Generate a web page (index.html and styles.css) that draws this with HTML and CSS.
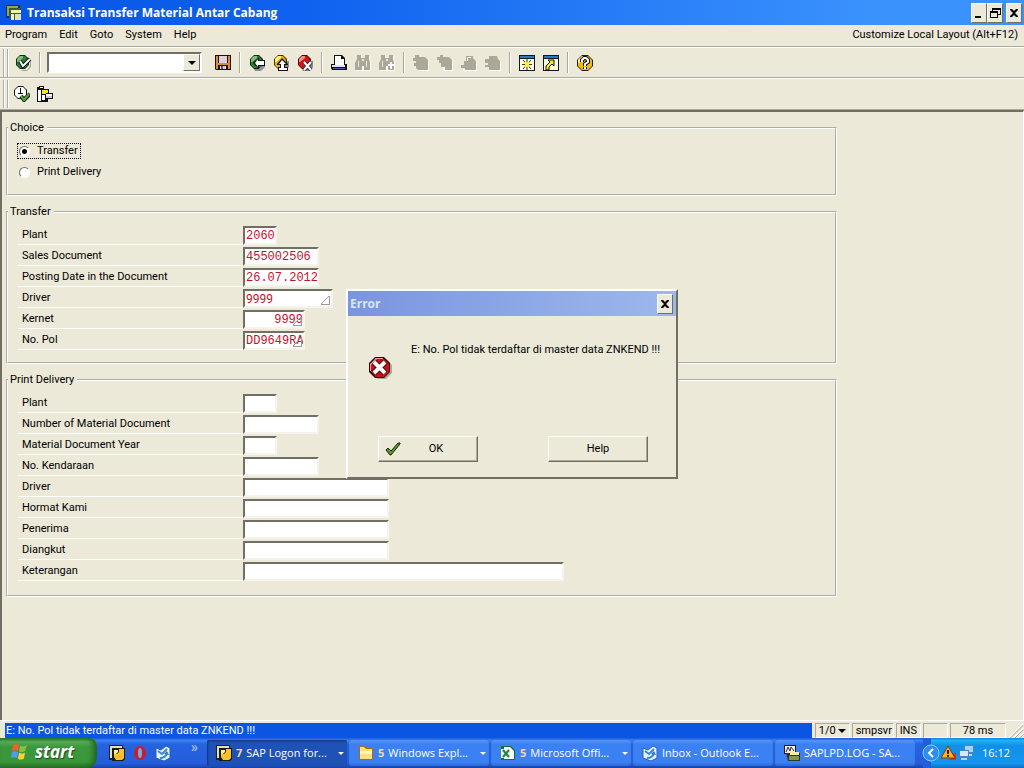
FILE: index.html
```html
<!DOCTYPE html>
<html lang="id">
<head>
<meta charset="utf-8">
<title>Transaksi Transfer Material Antar Cabang</title>
<link rel="stylesheet" href="styles.css">
</head>
<body>
<svg class="sprite" aria-hidden="true">
  <defs>
    <symbol id="app" viewBox="0 0 16 16">
      <path fill="#16324a" d="M0 0h14v3H3v10H0z"/><path fill="#8fa84e" d="M1 1h11v2H3v8H1z"/>
      <path fill="#3c5a2a" d="M3 3h12v12H5V9H3z"/><path fill="#f6f2a8" d="M5 5h10v3H5zM5 9h3v6H5z"/><path fill="#d9e3c0" d="M9 9h6v6H9z"/>
    </symbol>
    <symbol id="ok" viewBox="0 0 16 16">
      <path fill="#a9a690" d="M15 6h1v6l-4 4H7l-1-1h6l3-4z"/><path fill="#0b2e12" d="M5 0h5l4 4v6l-4 4H5l-4-4V4z"/><path fill="#2d7c3a" d="M5 1h5l3 4v5l-3 3H5l-3-3V4z"/><path fill="#86bd7e" d="M5 1h3v2L3 7H2V4z"/>
      <path fill="none" stroke="#111" stroke-width="4" d="M5 6l3 5 7-7"/><path fill="none" stroke="#fff" stroke-width="2" d="M5 6l3 5 7-7"/>
    </symbol>
    <symbol id="save" viewBox="0 0 16 16">
      <path fill="#1a1208" d="M0 0h16v15H1l-1-1z"/><path fill="#d8902c" d="M1 1h2v13H1zM13 1h2v13h-2zM3 8h10v2H3z"/><path fill="#ddd0e2" d="M4 1h8v7H4zM5 11h6v3H5z"/><path fill="#694a8b" d="M6 11h2v3H6z"/>
    </symbol>
    <symbol id="back" viewBox="0 0 16 16">
      <path fill="#8c8a9a" d="M14 6h2v6l-4 4H6l-1-2h6l3-4z"/><path fill="#0b2e12" d="M5 0h5l4 4v6l-4 4H5l-4-4V4z"/><path fill="#2d7c3a" d="M5 1h5l3 4v5l-3 3H5l-3-3V4z"/><path fill="#86bd7e" d="M5 1h3v2L3 7H2V4z"/>
      <path fill="#111" d="M4 8l6-6v3h6v6h-6v3z"/><path fill="#fff" d="M6 8l3-4v2h6v4H9v2z"/>
    </symbol>
    <symbol id="up" viewBox="0 0 16 16">
      <path fill="#8c8a9a" d="M14 6h2v6l-4 4H6l-1-2h6l3-4z"/><path fill="#4a3400" d="M5 0h5l4 4v6l-4 4H5l-4-4V4z"/><path fill="#f0b400" d="M5 1h5l3 4v5l-3 3H5l-3-3V4z"/><path fill="#fff08a" d="M5 1h3v2L3 7H2V4z"/>
      <path fill="#111" d="M9 3l6 6v1h-3v2h3v4H5v-4h2v-2H4V9z"/><path fill="#fff" d="M9 5l4 4h-2v4h3v2H6v-2h2V9H6z"/>
    </symbol>
    <symbol id="cancel" viewBox="0 0 16 16">
      <path fill="#8c8a9a" d="M14 6h2v6l-4 4H6l-1-2h6l3-4z"/><path fill="#3c0505" d="M5 0h5l4 4v6l-4 4H5l-4-4V4z"/><path fill="#d01515" d="M5 1h5l3 4v5l-3 3H5l-3-3V4z"/><path fill="#f58d8d" d="M5 1h3v2L3 7H2V4z"/>
      <path fill="none" stroke="#333" stroke-width="4" d="M7 7l7 8M14 7l-7 8"/><path fill="none" stroke="#fff" stroke-width="2" d="M7 7l7 8M14 7l-7 8"/>
    </symbol>
    <symbol id="print" viewBox="0 0 16 16">
      <path fill="#111" d="M3 0h8l3 3v6h2v6H1l-1-2V9h3z"/><path fill="#fff" d="M4 1h6v3h3v6H4z"/><path fill="#dfe3f3" d="M1 10h13v2H1z"/><path fill="#4a5fae" d="M2 13h12v1H2z"/>
    </symbol>
    <symbol id="find" viewBox="0 0 16 16">
      <path fill="#fff" d="M3 1h4v3h3V1h5v4l1 2v9H1V8z"/><path fill="#aca899" d="M2 0h4v3h4V0h4v4l1 3v8H9v-4H7v4H0V8l2-4z"/><path fill="#ece9d8" d="M7 4h2v2H7zM3 6h1v6H3zM11 6h1v6h-1z"/>
    </symbol>
    <symbol id="findnext" viewBox="0 0 16 16">
      <path fill="#fff" d="M3 1h4v3h3V1h5v4l1 2v9H1V8z"/><path fill="#aca899" d="M2 0h4v3h4V0h4v4l1 3v8H9v-4H7v4H0V8l2-4z"/><path fill="#fff" d="M11 7h2v2h2v2h-2v3h-2v-3H9V9h2z"/><path fill="#ece9d8" d="M7 4h2v2H7zM3 6h1v6H3z"/>
    </symbol>
    <symbol id="first" viewBox="0 0 16 16">
      <path fill="#fff" d="M4 3h9l3 4v9H6l-2-4z"/><path fill="#aca899" d="M2 0h4v2h6l3 3v10H5l-2-2v-2H1V8h2V6H0V3h2z"/>
    </symbol>
    <symbol id="prev" viewBox="0 0 16 16">
      <path fill="#fff" d="M5 3h8l3 4v9H6v-5z"/><path fill="#aca899" d="M0 2h3V0h3v2h6l3 3v10H8v-3H4V8H2V5H0z"/><path fill="#fff" d="M5 12h3v1H5z"/>
    </symbol>
    <symbol id="next" viewBox="0 0 16 16">
      <path fill="#fff" d="M6 3h6l4 4v9H2v-2h4z"/><path fill="#aca899" d="M5 1h7v2l3 3v9H4v-2H0v-3h3V6h2z"/><path fill="#fff" d="M7 2h3v1H7v3H6V3z"/>
    </symbol>
    <symbol id="last" viewBox="0 0 16 16">
      <path fill="#fff" d="M5 3h7l4 4v9H4v-2z"/><path fill="#aca899" d="M4 1h8l1 3 2 2v9H4v-3H0v-2h3V8H0V4h4z"/>
    </symbol>
    <symbol id="session" viewBox="0 0 16 16">
      <path fill="#101820" d="M0 0h16v16H0z"/><path fill="#2f78c0" d="M1 1h14v2H1z"/><path fill="#fffde0" d="M1 4h14v11H1z"/>
      <path stroke="#333" d="M8 4v11M3 9.500h10M4 5l8 9M12 5l-8 9"/><path fill="#ffe928" d="M6 7h4v5H6z"/>
    </symbol>
    <symbol id="shortcut" viewBox="0 0 16 16">
      <path fill="#101820" d="M0 0h16v16H0z"/><path fill="#2f78c0" d="M1 1h14v2H1z"/><path fill="#fffde0" d="M1 4h14v11H1z"/>
      <path fill="#ffe928" stroke="#111" d="M5 5h6v6L9 9l-3 3v3H3v-4l4-4z"/>
    </symbol>
    <symbol id="help" viewBox="0 0 16 16">
      <path fill="#2a2000" d="M5 0h6l5 5v6l-5 5H5l-5-5V5z"/><path fill="#f0b81c" d="M5 1h6l4 4v6l-4 4H5l-4-4V5z"/><path fill="#fff2a0" d="M5 1h3L2 8H1V5z"/>
      <path fill="none" stroke="#111" stroke-width="4" d="M5 7V5l2-2h2l2 2v2L8 9v2M8 12v2"/><path fill="none" stroke="#fff" stroke-width="2" d="M5 7V5l2-2h2l2 2v2L8 9v2M8 12v2"/>
    </symbol>
    <symbol id="execute" viewBox="0 0 16 16">
      <path fill="#111" d="M4 0h5l4 4v5l-4 4H4L0 9V4z"/><path fill="#fff" d="M4 1h5l3 3v5l-3 3H4L1 9V4z"/>
      <path fill="none" stroke="#111" d="M6.500 2v6M4 7.500h5"/><path fill="none" stroke="#14300f" stroke-width="4" d="M7 10l3 4 6-6"/><path fill="none" stroke="#63a347" stroke-width="2" d="M7 10l3 4 5-6"/>
    </symbol>
    <symbol id="variant" viewBox="0 0 16 16">
      <path fill="#111" d="M0 1h2V0h5v3h5v4h4v6h-5v3H0z"/><path fill="#fff" d="M3 1h3v1H3zM1 4h3v11H1zM5 9h3v5H5z"/><path fill="#ffe02b" d="M5 4h6v3H9v1H5z"/><path fill="#fff" d="M9 8h6v2H9z"/><path fill="#c3c9e4" d="M9 10h6v2H9z"/>
    </symbol>
    <symbol id="stop" viewBox="0 0 24 24">
      <path fill="#aca899" d="M9 3h9l6 6v8l-6 6H9z"/><path fill="#250505" d="M7 1h9l6 6v9l-6 6H7l-6-6V7z"/><path fill="#ca1017" d="M8 2h7l6 6v8l-5 5H8l-6-6V8z"/><path fill="#f49a9a" d="M8 2h7v1H9L3 9v6H2V8z"/>
      <path fill="none" stroke="#300" stroke-width="6" d="M6 6l11 11M17 6L6 17"/><path fill="none" stroke="#fff" stroke-width="4" d="M6 6l11 11M17 6L6 17"/>
    </symbol>
    <symbol id="tick" viewBox="0 0 16 16">
      <path fill="#5f9232" stroke="#17250c" stroke-width="1" d="M1 9l2-2 3 3 7-8h2v1L6 14H5z"/>
    </symbol>
    <symbol id="flag" viewBox="0 0 20 18">
      <path fill="#f0602c" d="M3 2c2-1.500 4-1.500 6 0L8 8C6 7 4 7 2 8z"/><path fill="#83c341" d="M10 2.500c2 1.300 4 1.300 7-.5l-2 6c-2 1.500-4 1.500-6 .2z"/><path fill="#4f9cf2" d="M2 9c2-1 4-1 6 0l-1 6c-2-1-4-1-6 0z"/><path fill="#fcd03a" d="M9 9.500c2 1.300 4 1.300 6 0l-1 6c-2 1.400-4 1.400-6 .2z"/>
    </symbol>
    <symbol id="logon" viewBox="0 0 16 16">
      <path fill="#12223a" d="M0 0h14v3H3v12H0z"/><path fill="#e4dfb8" d="M1 1h12v2H3v10H1z"/><path fill="#1b1b18" d="M3 3h13v11l-2 2H3z"/><path fill="#ffc128" d="M5 9h3l2-2V4h5v9l-2 2H7l-2-3z"/><path fill="#fff0a0" d="M5 5h4v2L7 9H5z"/>
    </symbol>
    <symbol id="opera" viewBox="0 0 16 16">
      <ellipse cx="8" cy="8" rx="6" ry="7" fill="#c61f2b"/><ellipse cx="8" cy="8" rx="2" ry="5" fill="#7fa7e8"/>
    </symbol>
    <symbol id="outlook" viewBox="0 0 16 16">
      <path fill="#e9f3ff" stroke="#2a5fa8" d="M1 3l5 2 5-4 4 2v10l-6 3-8-3z"/><path fill="none" stroke="#3a86d4" stroke-width="2" d="M3 6l4 3 5-5M5 13c4 0 6-1 7-5"/><path fill="#2c79cc" d="M9 9l3-3 2 4z"/>
    </symbol>
    <symbol id="folder" viewBox="0 0 16 16">
      <path fill="#a36f12" d="M1 1h6l2 2h6v12H1z"/><path fill="#ffe07a" d="M2 2h4l2 2h6v10H2z"/><path fill="#fff3b5" d="M2 6h12v3H2z"/>
    </symbol>
    <symbol id="excel" viewBox="0 0 16 16">
      <path fill="#1d6b35" d="M1 1h10l4 4v10H1z"/><path fill="#fff" d="M4 2h6l4 4v8H4z"/><path fill="#eaf5e8" d="M1 4h9v9H1z"/><path stroke="#218442" stroke-width="2" d="M3 5l6 7M9 5l-6 7"/>
    </symbol>
    <symbol id="lpd" viewBox="0 0 16 16">
      <path fill="#1a1a1a" d="M0 0h12v9H0z"/><path fill="#eee" d="M1 1h10v7H1z"/><path fill="none" stroke="#333" d="M2 7l2-5 2 4 1-4 3 4"/><path fill="#333" d="M2 8h14v8H4z"/><path fill="#f5efa0" d="M6 7h9v3H6z"/><path fill="#7f9b4f" d="M5 11h10v4H5z"/>
    </symbol>
    <symbol id="warn" viewBox="0 0 16 16">
      <path fill="#d33620" d="M8 8h7v7H8z"/><path fill="#ffb31e" stroke="#7a3e00" d="M7 1l7 12H0z"/><path fill="#222" d="M6 5h2v4H6zM6 10h2v2H6z"/>
    </symbol>
    <symbol id="net" viewBox="0 0 16 16">
      <path fill="#4a83c4" d="M6 0h10v9H6z"/><path fill="#a9d0f7" d="M7 1h8v6H7z"/><path fill="#4a83c4" d="M1 5h10v8H1z"/><path fill="#d4e9ff" d="M2 6h8v5H2z"/><path fill="#c8d2dc" d="M3 13h6v2H3zM11 9h3v2h-3z"/>
    </symbol>
  </defs>
</svg>

<header class="titlebar">
  <svg class="icon"><use href="#app"/></svg>
  <h1 class="title">Transaksi Transfer Material Antar Cabang</h1>
  <div class="caption-buttons">
    <button class="cap" aria-label="Minimize"><svg viewBox="0 0 12 12"><path d="M2 9h6v2H2z"/></svg></button>
    <button class="cap" aria-label="Restore"><svg viewBox="0 0 12 12"><path fill-rule="evenodd" d="M3 1h9v7H9v3H1V4h2zM4 3v1h5v3h2V3zM2 6v4h6V6z"/></svg></button>
    <button class="cap cap-close" aria-label="Close"><svg viewBox="0 0 12 12"><path d="M2 2h2l2 2 2-2h2v1L7 6l3 3v1H8L6 8l-2 2H2V9l3-3-3-3z"/></svg></button>
  </div>
</header>

<nav class="menubar">
  <button>Program</button><button>Edit</button><button>Goto</button><button>System</button><button>Help</button>
  <button class="layout-menu">Customize Local Layout (Alt+F12)</button>
</nav>

<div class="toolbar">
  <span class="grip"></span>
  <button class="tool" aria-label="Enter"><svg class="icon"><use href="#ok"/></svg></button>
  <span class="sep"></span>
  <div class="combo"><input type="text" aria-label="Command"><button aria-label="Command history"><i class="arrow"></i></button></div>
  <button class="tool tool-save" aria-label="Save"><svg class="icon"><use href="#save"/></svg></button>
  <span class="sep"></span>
  <button class="tool" aria-label="Back"><svg class="icon"><use href="#back"/></svg></button>
  <button class="tool" aria-label="Exit"><svg class="icon"><use href="#up"/></svg></button>
  <button class="tool" aria-label="Cancel"><svg class="icon"><use href="#cancel"/></svg></button>
  <span class="sep"></span>
  <button class="tool" aria-label="Print"><svg class="icon"><use href="#print"/></svg></button>
  <button class="tool" aria-label="Find" disabled><svg class="icon"><use href="#find"/></svg></button>
  <button class="tool" aria-label="Find next" disabled><svg class="icon"><use href="#findnext"/></svg></button>
  <span class="sep"></span>
  <button class="tool" aria-label="First page" disabled><svg class="icon"><use href="#first"/></svg></button>
  <button class="tool" aria-label="Previous page" disabled><svg class="icon"><use href="#prev"/></svg></button>
  <button class="tool" aria-label="Next page" disabled><svg class="icon"><use href="#next"/></svg></button>
  <button class="tool" aria-label="Last page" disabled><svg class="icon"><use href="#last"/></svg></button>
  <span class="sep"></span>
  <button class="tool" aria-label="New session"><svg class="icon"><use href="#session"/></svg></button>
  <button class="tool" aria-label="Create shortcut"><svg class="icon"><use href="#shortcut"/></svg></button>
  <span class="sep"></span>
  <button class="tool" aria-label="Help"><svg class="icon"><use href="#help"/></svg></button>
</div>

<div class="toolbar toolbar-app">
  <span class="grip"></span>
  <button class="tool" aria-label="Execute"><svg class="icon"><use href="#execute"/></svg></button>
  <button class="tool" aria-label="Get variant"><svg class="icon"><use href="#variant"/></svg></button>
</div>

<main class="canvas">
  <fieldset class="group">
    <legend>Choice</legend>
    <div class="choices">
      <label class="choice focused"><input type="radio" name="choice" checked>Transfer</label>
      <label class="choice"><input type="radio" name="choice">Print Delivery</label>
    </div>
  </fieldset>
  <fieldset class="group">
    <legend>Transfer</legend>
    <div class="row"><label for="t1">Plant</label><input id="t1" class="w-xs" type="text" value="2060"></div>
    <div class="row"><label for="t2">Sales Document</label><input id="t2" class="w-m" type="text" value="455002506"></div>
    <div class="row"><label for="t3">Posting Date in the Document</label><input id="t3" class="w-m" type="text" value="26.07.2012"></div>
    <div class="row"><label for="t4">Driver</label><span class="marked"><input id="t4" class="w-l prop" type="text" value="9999"></span></div>
    <div class="row"><label for="t5">Kernet</label><span class="marked"><input id="t5" class="w-s right" type="text" value="9999"></span></div>
    <div class="row"><label for="t6">No. Pol</label><span class="marked"><input id="t6" class="w-s" type="text" value="DD9649RA"></span></div>
  </fieldset>
  <fieldset class="group">
    <legend>Print Delivery</legend>
    <div class="row"><label for="p1">Plant</label><input id="p1" class="w-xs" type="text"></div>
    <div class="row"><label for="p2">Number of Material Document</label><input id="p2" class="w-m" type="text"></div>
    <div class="row"><label for="p3">Material Document Year</label><input id="p3" class="w-xs" type="text"></div>
    <div class="row"><label for="p4">No. Kendaraan</label><input id="p4" class="w-m" type="text"></div>
    <div class="row"><label for="p5">Driver</label><input id="p5" class="w-xl" type="text"></div>
    <div class="row"><label for="p6">Hormat Kami</label><input id="p6" class="w-xl" type="text"></div>
    <div class="row"><label for="p7">Penerima</label><input id="p7" class="w-xl" type="text"></div>
    <div class="row"><label for="p8">Diangkut</label><input id="p8" class="w-xl" type="text"></div>
    <div class="row"><label for="p9">Keterangan</label><input id="p9" class="w-xxl" type="text"></div>
  </fieldset>
</main>

<div class="statusbar">
  <div class="message">E: No. Pol tidak terdaftar di master data ZNKEND !!!</div>
  <button class="pane">1/0<i class="arrow"></i></button>
  <span class="pane pane-host">smpsvr</span>
  <span class="pane">INS</span>
  <span class="pane pane-empty"></span>
  <span class="pane pane-time">78 ms</span>
  <svg class="resize" viewBox="0 0 16 16"><path stroke="#fff" stroke-width="2" d="M1 16L16 1M6 16L16 6M11 16l5-5"/><path stroke="#9d9a8a" stroke-width="1" d="M2 16L16 2M7 16l9-9M12 16l4-4"/></svg>
</div>

<footer class="taskbar">
  <button class="start"><svg><use href="#flag"/></svg>start</button>
  <div class="quick">
    <button aria-label="SAP Logon"><svg class="icon"><use href="#logon"/></svg></button>
    <button aria-label="Opera"><svg class="icon"><use href="#opera"/></svg></button>
    <button aria-label="Outlook Express"><svg class="icon"><use href="#outlook"/></svg></button>
    <span class="more">»</span>
  </div>
  <div class="tasks">
    <button class="task active"><svg class="icon"><use href="#logon"/></svg><b>7</b><span>SAP Logon for...</span><i class="arrow"></i></button>
    <button class="task"><svg class="icon"><use href="#folder"/></svg><b>5</b><span>Windows Expl...</span><i class="arrow"></i></button>
    <button class="task"><svg class="icon"><use href="#excel"/></svg><b>5</b><span>Microsoft Offi...</span><i class="arrow"></i></button>
    <button class="task"><svg class="icon"><use href="#outlook"/></svg><span>Inbox - Outlook E...</span></button>
    <button class="task"><svg class="icon"><use href="#lpd"/></svg><span>SAPLPD.LOG - SA...</span></button>
  </div>
  <div class="tray">
    <button class="collapse" aria-label="Show hidden icons"><svg viewBox="0 0 18 18"><circle cx="9" cy="9" r="8" fill="#2f8df0" stroke="#8cc8ff"/><path d="M11 5L7 9l4 4" fill="none" stroke="#fff" stroke-width="2"/></svg></button>
    <svg class="icon"><use href="#warn"/></svg>
    <svg class="icon"><use href="#net"/></svg>
    <time>16:12</time>
  </div>
</footer>

<div class="overlay">
  <section class="dialog" role="dialog" aria-labelledby="dlg">
    <header class="dialog-title"><h2 id="dlg">Error</h2><button class="cap" aria-label="Close"><svg viewBox="0 0 12 12"><path d="M2 2h2l2 2 2-2h2v1L7 6l3 3v1H8L6 8l-2 2H2V9l3-3-3-3z"/></svg></button></header>
    <div class="dialog-body">
      <svg class="stop"><use href="#stop"/></svg>
      <p>E: No. Pol tidak terdaftar di master data ZNKEND !!!</p>
    </div>
    <div class="dialog-actions">
      <button class="push push-icon"><svg class="icon"><use href="#tick"/></svg><span>OK</span></button>
      <button class="push"><span>Help</span></button>
    </div>
  </section>
</div>
</body>
</html>
```
FILE: styles.css
```css
:root {
  --face: #ece9d8;
  --shadow: #aca899;
  --dark: #716f64;
  --ui: "Open Sans", "Noto Sans", sans-serif;
  --form: Roboto, "Liberation Sans", sans-serif;
}
* { box-sizing: border-box; }
body {
  margin: 0;
  height: 100vh;
  display: flex;
  flex-direction: column;
  background: var(--face);
  color: #000;
  font: 11px/16px var(--form);
  overflow: hidden;
}
button, input { font: inherit; color: inherit; }
button { padding: 0; border: 0; background: none; white-space: nowrap; }
h1, h2, p { margin: 0; }
svg { display: block; }
.sprite { display: none; }
.icon { width: 16px; height: 16px; flex: none; }
.arrow {
  width: 0; height: 0; flex: none;
  border: 4px solid transparent;
  border-top-color: currentColor;
  border-bottom: 0;
}

.titlebar {
  display: flex;
  align-items: center;
  flex: none;
  height: 25px;
  padding: 0 2px 0 6px;
  background: linear-gradient(90deg, #0854e4, #0f62ef 30%, #3a92fd 85%, #3a92fd);
}
.title { margin-left: 5px; flex: 1; color: #fff; font: bold 12px/18px var(--ui); }
.caption-buttons { display: flex; }
.cap {
  width: 16px; height: 20px;
  display: grid;
  place-items: center;
  background: var(--face);
  border: 1px solid;
  border-color: #fff var(--dark) var(--dark) #fff;
}
.cap svg { width: 12px; height: 12px; }
.cap-close { margin-left: 3px; }

.menubar { display: flex; gap: 12px; flex: none; height: 22px; padding: 0 6px 0 5px; border-bottom: 1px solid var(--shadow); line-height: 20px; }
.menubar button { height: 20px; }
.layout-menu { margin-left: auto; }

.toolbar {
  display: flex;
  align-items: center;
  flex: none;
  height: 31px;
  padding: 0 3px;
  border-top: 1px solid #fff;
  border-bottom: 1px solid var(--shadow);
}
.grip { width: 6px; height: 28px; margin-right: 2px; border-left: 2px groove #fff; border-right: 2px groove #fff; }
.tool { width: 24px; height: 24px; display: grid; place-items: center; flex: none; }
.toolbar-app { height: 32px; }
.toolbar-app .grip { margin-right: 1px; }
.toolbar-app .tool { width: 23px; }
.sep { width: 2px; height: 21px; margin: 0 4px; flex: none; border-left: 1px solid var(--shadow); border-right: 1px solid #fff; }
.combo {
  display: flex;
  width: 155px; height: 21px;
  margin: 0 9px 0 2px;
  background: #fff;
  border: 2px solid;
  border-color: var(--dark) #fff #fff var(--dark);
}
.combo input { flex: 1; min-width: 0; border: 0; padding: 0 2px; background: none; }
.combo button { width: 17px; display: grid; place-items: center; background: var(--face); border: 1px solid; border-color: #fff var(--dark) var(--dark) #fff; }

.canvas {
  flex: 1;
  min-height: 0;
  padding: 8px 4px 0;
  border-top: 2px solid var(--dark);
  border-left: 2px solid var(--dark);
  border-right: 1px solid #fff;
}
.group {
  max-width: 831px;
  margin: 0 0 8px;
  padding: 4px 10px 12px;
  border: 2px groove #fff;
}
.group:last-child { padding-bottom: 14px; }
.group legend { padding: 0 3px 0 2px; margin-left: -10px; line-height: 16px; }
.choices { display: flex; flex-direction: column; align-items: flex-start; gap: 5px; padding: 3px 0 2px; }
.choice { display: flex; align-items: center; gap: 7px; padding: 0 2px 0 1px; border: 1px solid transparent; height: 16px; margin-left: -1px; }
.focused { border: 1px dotted #000; }
.choice input {
  appearance: none;
  width: 11px; height: 11px;
  margin: 0;
  border: 1px solid;
  border-color: var(--dark) #fff #fff var(--dark);
  border-radius: 50%;
  background: #fff;
}
.choice input:checked { background: radial-gradient(circle, #000 2px, #fff 3px); }
.row { display: flex; align-items: flex-end; height: 21px; }
.row label { width: 225px; height: 21px; padding: 3px 0 0 4px; border-bottom: 1px solid #fff; }
.row input {
  height: 19px;
  padding: 0 0 0 1px;
  background: #fff;
  border: 2px solid;
  border-color: var(--dark) #f6f4ea #f6f4ea var(--dark);
  border-radius: 0;
  color: #c4112b;
  font: 12px/15px "Liberation Mono", monospace;
}
.row .prop { font-family: var(--form); }
.row .right { text-align: right; }
.w-xs { width: 34px; }
.w-s { width: 62px; }
.w-m { width: 76px; }
.w-l { width: 90px; }
.w-xl { width: 146px; }
.w-xxl { width: 321px; }
.marked { position: relative; display: flex; }
.marked::after {
  content: "";
  position: absolute;
  right: 3px; bottom: 3px;
  width: 8px; height: 8px;
  background: linear-gradient(135deg, transparent 45%, #999 45%, #999 55%, transparent 55%);
  border-right: 1px solid #999;
  border-bottom: 1px solid #999;
}

.statusbar { display: flex; gap: 2px; flex: none; height: 18px; padding: 2px 0 0 5px; border-top: 1px solid #fff; }
.message { flex: 1; background: #0a56e2; color: #fff; padding-left: 1px; line-height: 15px; margin-right: 1px; }
.pane {
  display: flex;
  align-items: center;
  gap: 2px;
  padding: 0 3px;
  line-height: 13px;
  border: 1px solid;
  border-color: var(--shadow) #fff #fff var(--shadow);
}
.pane-host { width: 42px; }
.pane-empty { width: 25px; }
.pane-time { width: 56px; justify-content: center; }
.resize { width: 16px; height: 15px; }

.taskbar {
  display: flex;
  flex: none;
  height: 30px;
  color: #fff;
  font: 11px/16px var(--ui);
  background: linear-gradient(#1f57d8, #3a83f5 8%, #2663df 20%, #245ddb 85%, #1941a5);
}
.start {
  display: flex;
  align-items: center;
  gap: 5px;
  width: 97px;
  padding: 0 0 2px 10px;
  border-radius: 0 8px 10px 0;
  background: linear-gradient(#2f7a2f, #58ad58 12%, #3c973c 30%, #399739 80%, #2a6e2a);
  box-shadow: inset -4px 0 5px #206a20;
  font: italic bold 17px/24px var(--ui);
  text-shadow: 1px 1px 1px #234a23;
}
.start svg { width: 20px; height: 18px; }
.quick { display: flex; align-items: center; gap: 7px; width: 110px; padding-left: 12px; }
.more { margin: 0 0 12px 13px; font-size: 14px; color: #b5cdf8; }
.tasks { display: flex; gap: 2px; flex: 1; min-width: 0; padding: 2px 8px 2px 0; }
.task {
  display: flex;
  align-items: center;
  gap: 4px;
  flex: 1;
  min-width: 0;
  padding: 0 3px 0 9px;
  border-radius: 2px;
  background: linear-gradient(#5a99fb, #3c81f3 15%, #3c81f3 85%, #2c6ad8);
  box-shadow: inset 0 0 1px #1e4fb5;
}
.task.active { background: #1e52b7; box-shadow: inset 1px 1px 2px #0f3382; }
.task b { color: #f5d9a8; }
.task .arrow { margin-left: auto; border-width: 3px 3px 0; }
.tray {
  display: flex;
  align-items: center;
  gap: 1px;
  width: 101px;
  border-left: 8px solid #245ddb;
  background: linear-gradient(#0f82e4, #1eb3f8 8%, #1290e9 25%, #1595ee 85%, #0b6fc0);
}
.collapse { margin-left: -9px; }
.collapse svg { width: 18px; height: 18px; }
.tray time { margin-left: 7px; }

.overlay { position: absolute; inset: 0; display: grid; place-items: center; }
.dialog {
  width: 332px;
  background: var(--face);
  border: 2px solid;
  border-color: #fff var(--dark) var(--dark) #fff;
}
.dialog-title {
  display: flex;
  align-items: center;
  justify-content: space-between;
  height: 25px;
  padding: 0 3px 0 2px;
  background: linear-gradient(90deg, #7a95e0, #9db8ec);
}
.dialog-title h2 { color: #dbe5fa; font: bold 12px/18px var(--ui); }
.dialog-body { display: flex; gap: 19px; height: 120px; padding: 26px 10px 0 20px; }
.stop { width: 24px; height: 24px; flex: none; margin-top: 14px; }
.dialog-actions { display: flex; justify-content: space-between; padding: 0 28px 15px 30px; }
.push {
  display: grid;
  grid-template-columns: 16px 1fr 16px;
  align-items: center;
  width: 100px; height: 26px;
  padding: 0 6px;
  border: 1px solid;
  border-color: #fff var(--dark) var(--dark) #fff;
  box-shadow: inset -1px -1px var(--shadow);
}
.push-icon { grid-template-columns: 16px 1fr; }
.push span { grid-column: 2; text-align: center; }
```
